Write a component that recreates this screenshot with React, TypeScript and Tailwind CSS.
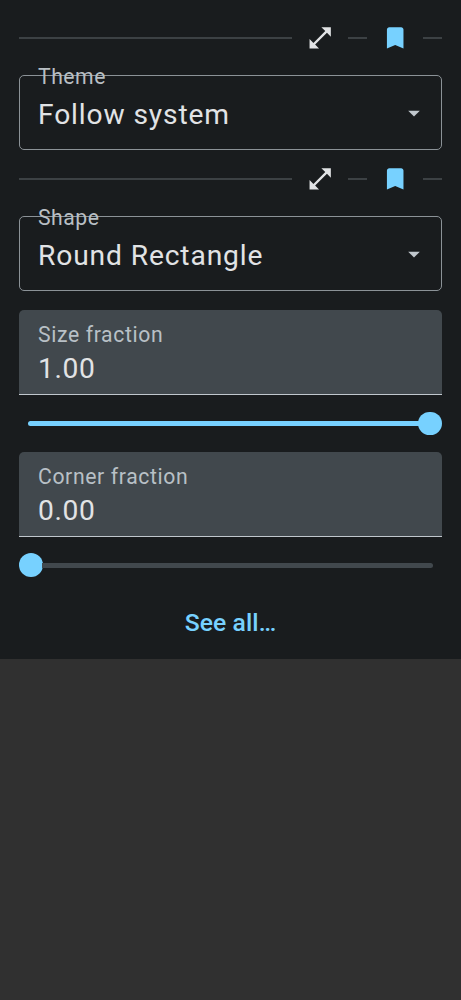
import React from "react";

function Divider() {
  return (
    <div className="flex h-[38px] items-center">
      <div className="h-[2px] w-[273px] bg-[#3c4144]" />
      <svg viewBox="0 0.3 24 24" className="ml-[14px] size-[28.4px] shrink-0 fill-[#e1e3e5]">
        <path d="M21 11V3h-8l3.29 3.29-10 10L3 13v8h8l-3.29-3.29 10-10z" />
      </svg>
      <div className="ml-[13.6px] h-[2px] w-[19px] bg-[#3c4144]" />
      <svg viewBox="0 0.3 24 24" className="ml-[14px] size-[28.4px] shrink-0 fill-[#77d1ff]">
        <path d="M17 3H7c-1.100 0-1.990.9-1.990 2L5 21l7-3 7 3V5c0-1.100-.9-2-2-2z" />
      </svg>
      <div className="ml-[13.6px] h-[2px] w-[19px] bg-[#3c4144]" />
    </div>
  );
}

function SelectField({ label, value }: { label: string; value: string }) {
  return (
    <div className="relative flex h-[75px] items-center justify-between rounded-[5px] border border-[#8b9297] pr-[13px] pl-[18px]">
      <span className="absolute -top-[12px] left-[18px] text-[21.2px] leading-[25px] tracking-[0.5px] text-[#b8bfc4]">
        {label}
      </span>
      <span className="mt-[4px] text-[28.2px] leading-[36px] tracking-[0.87px] text-[#e1e3e5]">{value}</span>
      <svg viewBox="0 0 24 24" className="size-[28px] fill-[#c0c7cd]">
        <path d="M7 10l5 5 5-5z" />
      </svg>
    </div>
  );
}

function NumberField({ label, value }: { label: string; value: string }) {
  return (
    <div className="flex h-[85px] flex-col rounded-t-[5px] border-b border-[#c0c7cd] bg-[#41484d] pt-[12px] pl-[19px]">
      <span className="text-[21.2px] leading-[26px] tracking-[0.62px] text-[#b8c0c6]">{label}</span>
      <span className="mt-[3px] text-[28.2px] leading-[36px] tracking-[0.65px] text-[#e1e3e5]">{value}</span>
    </div>
  );
}

function Slider({ full }: { full: boolean }) {
  return (
    <div className="flex h-[24px] items-center">
      {full && <div className="ml-[9px] h-[5px] flex-1 rounded-l-full bg-[#77d1ff]" />}
      <div className={full ? "-ml-px size-[23.6px] rounded-full bg-[#77d1ff]" : "size-[23.6px] rounded-full bg-[#77d1ff]"} />
      {!full && <div className="mr-[9px] -ml-px h-[5px] flex-1 rounded-r-full bg-[#41484d]" />}
    </div>
  );
}

export default function App() {
  return (
    <div className="min-h-screen bg-[#303030] font-['Roboto',sans-serif]">
      <main className="flex h-[659px] flex-col bg-[#191c1e] px-[19px] pt-[19px]">
        <Divider />
        <div className="mt-[18px]">
          <SelectField label="Theme" value="Follow system" />
        </div>
        <div className="mt-[10px]">
          <Divider />
        </div>
        <div className="mt-[18px]">
          <SelectField label="Shape" value="Round Rectangle" />
        </div>
        <div className="mt-[19px]">
          <NumberField label="Size fraction" value="1.00" />
        </div>
        <div className="mt-[16.5px]">
          <Slider full />
        </div>
        <div className="mt-[16px]">
          <NumberField label="Corner fraction" value="0.00" />
        </div>
        <div className="mt-[16.5px]">
          <Slider full={false} />
        </div>
        <button className="mt-[30px] self-center text-[24.7px] leading-[32px] font-medium tracking-[0.1px] text-[#77d1ff]">
          See all…
        </button>
      </main>
    </div>
  );
}
